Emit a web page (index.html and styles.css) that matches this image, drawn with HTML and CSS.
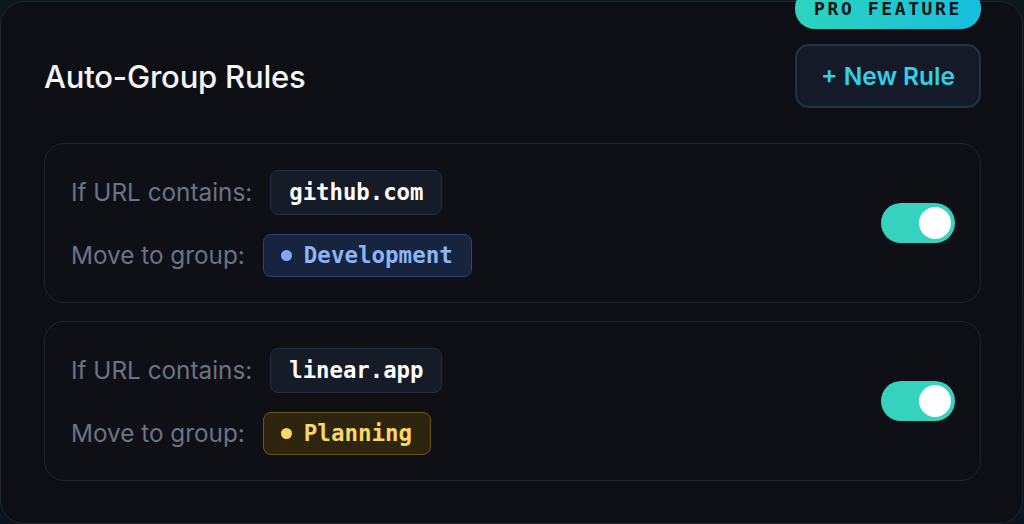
FILE: index.html
```html
<!DOCTYPE html>
<html lang="en">
<head>
<meta charset="utf-8">
<title>Auto-Group Rules</title>
<link rel="stylesheet" href="styles.css">
</head>
<body>
<section class="panel">
  <span class="pro-badge">PRO FEATURE</span>
  <header class="panel-head">
    <h2 class="panel-title">Auto-Group Rules</h2>
    <button class="new-rule">+ New Rule</button>
  </header>
  <div class="rules">
    <article class="rule">
      <div class="rule-body">
        <div class="rule-row">
          <span class="rule-label">If URL contains:</span>
          <code class="url-pill">github.com</code>
        </div>
        <div class="rule-row">
          <span class="rule-label">Move to group:</span>
          <span class="group-pill group-blue"><span class="dot"></span>Development</span>
        </div>
      </div>
      <span class="toggle on"><span class="knob"></span></span>
    </article>
    <article class="rule">
      <div class="rule-body">
        <div class="rule-row">
          <span class="rule-label">If URL contains:</span>
          <code class="url-pill">linear.app</code>
        </div>
        <div class="rule-row">
          <span class="rule-label">Move to group:</span>
          <span class="group-pill group-yellow"><span class="dot"></span>Planning</span>
        </div>
      </div>
      <span class="toggle on"><span class="knob"></span></span>
    </article>
  </div>
</section>
</body>
</html>
```
FILE: styles.css
```css
html, body {
  margin: 0;
  padding: 0;
  height: 100%;
}
body {
  background: linear-gradient(180deg, #0a1a1c 0%, #0a1420 100%);
  font-family: "Inter", "Liberation Sans", sans-serif;
  overflow: hidden;
}
.panel {
  position: relative;
  box-sizing: border-box;
  width: 1023px;
  height: 523px;
  margin-top: 1px;
  background: #0e0f14;
  border: 1px solid #23252d;
  border-radius: 24px;
  padding: 42px 41px 0 43px;
}
.pro-badge {
  position: absolute;
  top: -14px;
  right: 41px;
  width: 186px;
  height: 41px;
  box-sizing: border-box;
  border-radius: 20px;
  background: linear-gradient(90deg, #2dd4bf 0%, #16bfdc 100%);
  color: #0b1416;
  font-family: "DejaVu Sans Mono", "Liberation Mono", monospace;
  font-weight: bold;
  font-size: 18px;
  letter-spacing: 2.6px;
  display: flex;
  align-items: center;
  justify-content: center;
}
.panel-head {
  display: flex;
  align-items: center;
  justify-content: space-between;
  height: 64px;
}
.panel-title {
  margin: 0;
  color: #f5f6f8;
  font-size: 31px;
  font-weight: 500;
  letter-spacing: -0.2px;
}
.new-rule {
  width: 186px;
  height: 64px;
  box-sizing: border-box;
  background: #141a28;
  border: 2px solid #1c3644;
  border-radius: 14px;
  color: #2fd0e8;
  font-family: "Inter", "Liberation Sans", sans-serif;
  font-size: 24.5px;
  font-weight: 600;
  cursor: pointer;
}
.rules {
  display: flex;
  flex-direction: column;
  gap: 18px;
  margin-top: 35px;
}
.rule {
  box-sizing: border-box;
  height: 160px;
  display: flex;
  align-items: center;
  justify-content: space-between;
  padding: 0 25px 0 26px;
  border: 1.5px solid #23252d;
  border-radius: 20px;
  background: #0f1015;
}
.rule-body {
  display: flex;
  flex-direction: column;
  gap: 19px;
}
.rule-row {
  display: flex;
  align-items: center;
  gap: 18px;
}
.rule-label {
  color: #6b7385;
  font-size: 24.3px;
  font-weight: 400;
}
.url-pill {
  box-sizing: border-box;
  height: 45px;
  display: inline-flex;
  align-items: center;
  padding: 0 18px;
  background: #161b28;
  border: 1.5px solid #262c39;
  border-radius: 8px;
  color: #ffffff;
  font-family: "DejaVu Sans Mono", "Liberation Mono", monospace;
  font-weight: bold;
  font-size: 22.3px;
}
.group-pill {
  box-sizing: border-box;
  height: 43px;
  display: inline-flex;
  align-items: center;
  gap: 12px;
  padding: 0 18px 0 17px;
  border-radius: 8px;
  font-family: "DejaVu Sans Mono", "Liberation Mono", monospace;
  font-weight: bold;
  font-size: 22.5px;
}
.dot {
  width: 11px;
  height: 11px;
  border-radius: 50%;
}
.group-blue {
  background: #16243d;
  border: 1.5px solid #28476f;
  color: #8db5f6;
}
.group-blue .dot {
  background: #7eaaf5;
}
.group-yellow {
  background: #2d250e;
  border: 1.5px solid #6a5418;
  color: #f9d56a;
}
.group-yellow .dot {
  background: #fcd56b;
}
.toggle {
  box-sizing: border-box;
  width: 74px;
  height: 40px;
  border-radius: 20px;
  background: #35d2bd;
  padding: 4px;
  display: flex;
  justify-content: flex-end;
}
.knob {
  width: 32px;
  height: 32px;
  border-radius: 50%;
  background: #ffffff;
}
```
